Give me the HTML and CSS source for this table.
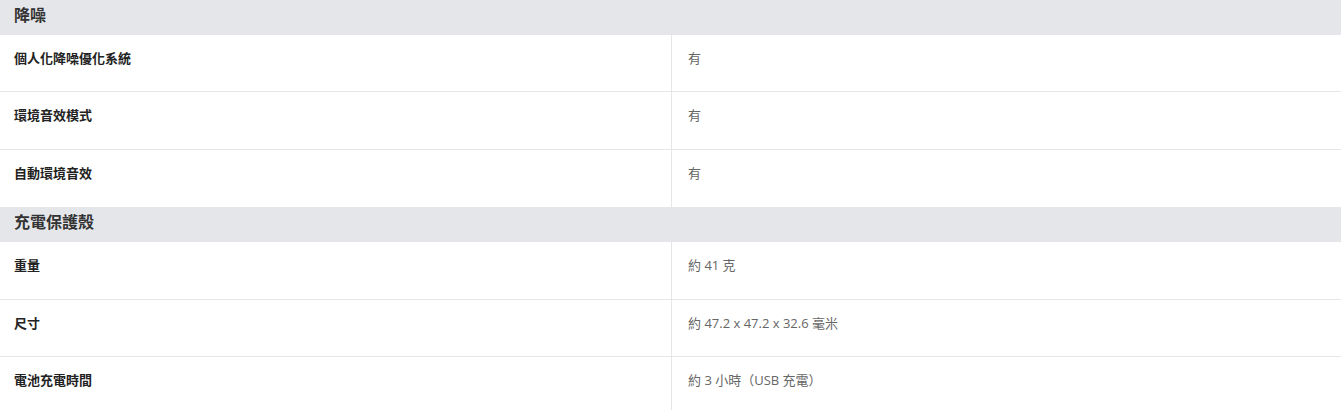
FILE: index.html
```html
<!DOCTYPE html>
<html lang="zh-Hant">
<head>
<meta charset="utf-8">
<link rel="stylesheet" href="styles.css">
</head>
<body>
<div class="spec">
  <div class="group">降噪</div>
  <div class="row"><div class="label">個人化降噪優化系統</div><div class="value">有</div></div>
  <div class="row"><div class="label">環境音效模式</div><div class="value">有</div></div>
  <div class="row"><div class="label">自動環境音效</div><div class="value">有</div></div>
  <div class="group">充電保護殼</div>
  <div class="row"><div class="label">重量</div><div class="value">約 41 克</div></div>
  <div class="row"><div class="label">尺寸</div><div class="value">約 47.2 x 47.2 x 32.6 毫米</div></div>
  <div class="row"><div class="label">電池充電時間</div><div class="value">約 3 小時（USB 充電）</div></div>
</div>
</body>
</html>
```
FILE: styles.css
```css
html, body { margin: 0; padding: 0; background: #fff; }
body { font-family: "Open Sans", "Noto Sans CJK TC", sans-serif; }
.spec { width: 1341px; }
.group {
  height: 35px;
  background: #e5e6ea;
  color: #333;
  font-size: 16px;
  font-weight: 700;
  line-height: 31px;
  padding-left: 14px;
  box-sizing: border-box;
}
.row {
  display: grid;
  grid-template-columns: 672px 1fr;
  height: 57.4px;
  border-bottom: 1px solid #e6e6e6;
  box-sizing: border-box;
}
.row:has(+ .group) { border-bottom: none; }
.row:last-child { border-bottom: none; }
.label {
  border-right: 1px solid #e6e6e6;
  padding: 13px 14px 0;
  font-size: 13px;
  font-weight: 700;
  color: #222;
  line-height: 20px;
}
.value {
  padding: 13px 16px 0;
  font-size: 13px;
  color: #666;
  line-height: 20px;
}
```
